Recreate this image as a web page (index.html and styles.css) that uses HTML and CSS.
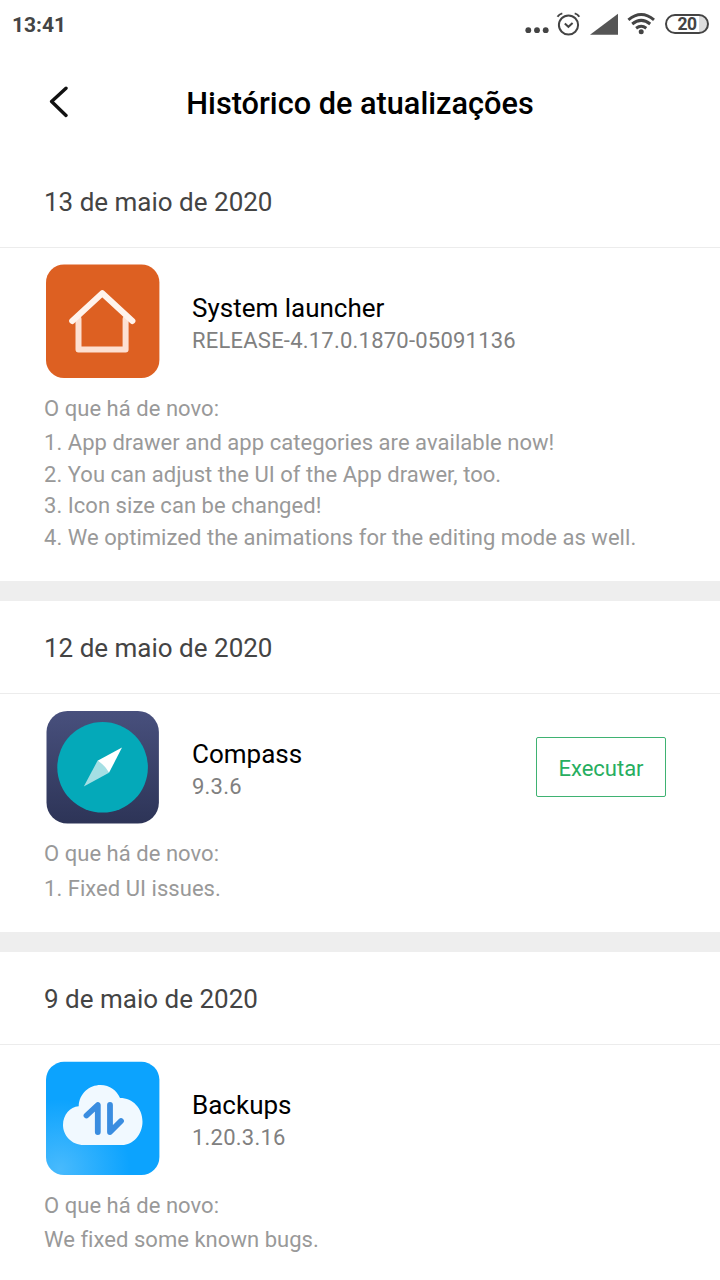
FILE: index.html
```html
<!DOCTYPE html>
<html lang="pt">
  <head>
    <meta charset="UTF-8" />
    <meta name="viewport" content="width=device-width, initial-scale=1.0" />
    <title>Histórico de atualizações</title>
    <link rel="stylesheet" href="styles.css">
  </head>
  <body>
    <div class="status-bar">
      <span class="clock">13:41</span>
      <div class="status-icons">
        <svg class="dots" width="24" height="24" viewBox="0 0 24 24">
          <circle cx="3.3" cy="18.2" r="2.9" />
          <circle cx="12" cy="18.2" r="2.9" />
          <circle cx="20.7" cy="18.2" r="2.9" />
        </svg>
        <svg class="alarm" width="24" height="24" viewBox="0 0 24 24">
          <circle cx="12.5" cy="13" r="9.6" />
          <path d="M8.8 11.6l3.6 3.2 4.2-3.8M1.5 4.8Q3.2 2.2 6.3 1.4M18.7 1.4Q21.8 2.2 23.3 4.8" />
        </svg>
        <svg class="signal" width="28" height="24" viewBox="0 0 28 24">
          <path d="M28 1.8V22.8H0z" />
        </svg>
        <svg class="wifi" width="28" height="24" viewBox="0 0 28 24">
          <path d="M1.4 7.8Q14.2-2.8 27 7.8M5.2 12Q14.2 4.8 23.2 12M9.1 16.2Q14.2 12.4 19.3 16.2" />
          <circle cx="14.2" cy="19.7" r="2.5" />
        </svg>
        <div class="battery"><span>20</span></div>
      </div>
    </div>

    <header class="header">
      <a class="back" href="#" aria-label="Voltar">
        <svg width="21" height="32" viewBox="0 0 21 32">
          <path d="M18 2.2L3.6 15.6 18 29.4" />
        </svg>
      </a>
      <h1>Histórico de atualizações</h1>
    </header>

    <main>
      <section class="update">
        <h2 class="date">13 de maio de 2020</h2>
        <div class="app">
          <svg class="app-icon" viewBox="0 0 114 114">
            <rect y=".5" width="113.4" height="113.5" rx="18" fill="#dd6022" />
            <g fill="none" stroke-width="6" stroke-linejoin="round" stroke-linecap="round">
              <path d="M32.5 55V85.4H79.6V55" stroke="#fde0d2" />
              <path d="M26.2 57L56.3 29.2 86.4 57" stroke="#fff3ec" />
            </g>
          </svg>
          <div class="app-info">
            <h3>System launcher</h3>
            <p>RELEASE-4.17.0.1870-05091136</p>
          </div>
        </div>
        <div class="notes">
          <h4>O que há de novo:</h4>
          <p>1. App drawer and app categories are available now!</p>
          <p>2. You can adjust the UI of the App drawer, too.</p>
          <p>3. Icon size can be changed!</p>
          <p>4. We optimized the animations for the editing mode as well.</p>
        </div>
      </section>

      <section class="update">
        <h2 class="date">12 de maio de 2020</h2>
        <div class="app">
          <svg class="app-icon" viewBox="0 0 114 114">
            <defs>
              <linearGradient id="navy" x1="0" y1="0" x2="0" y2="1">
                <stop offset="0" stop-color="#48507d" />
                <stop offset="1" stop-color="#2d3457" />
              </linearGradient>
            </defs>
            <rect x=".5" y="1" width="112.4" height="112.6" rx="21" fill="url(#navy)" />
            <circle cx="56.6" cy="57.3" r="45.3" fill="#04a9b9" />
            <path d="M76 37.6L51.5 50.8 63 62.8z" fill="#fff" />
            <path d="M51.5 50.8L37.8 76.5 63 62.8Q58.5 54.5 51.5 50.8z" fill="#a4dfe4" />
          </svg>
          <div class="app-info">
            <h3>Compass</h3>
            <p>9.3.6</p>
          </div>
          <button class="btn-run" type="button">Executar</button>
        </div>
        <div class="notes">
          <h4>O que há de novo:</h4>
          <p>1. Fixed UI issues.</p>
        </div>
      </section>

      <section class="update">
        <h2 class="date">9 de maio de 2020</h2>
        <div class="app">
          <svg class="app-icon" viewBox="0 0 114 114">
            <defs>
              <radialGradient id="sky" cx=".12" cy=".95" r=".62">
                <stop offset="0" stop-color="#48bafd" />
                <stop offset="1" stop-color="#0ca3fe" />
              </radialGradient>
            </defs>
            <rect y=".8" width="113.4" height="113.2" rx="18" fill="url(#sky)" />
            <path d="M38 84C25 84 17 74 17 64 17 54 24 46 32.7 45.3 33 32.5 43.5 24 54.5 24 64 24 70.5 29.5 74 37 87 37 96.5 47.5 96.5 60.5 96.500 73.5 87 84 76 84z" fill="#f1f9ff" />
            <path d="M40.5 54.5L51.8 44V71M64 44V71L75 60" fill="none" stroke="#3a8de0" stroke-width="5.8" stroke-linecap="round" stroke-linejoin="round" />
          </svg>
          <div class="app-info">
            <h3>Backups</h3>
            <p>1.20.3.16</p>
          </div>
        </div>
        <div class="notes">
          <h4>O que há de novo:</h4>
          <p>We fixed some known bugs.</p>
        </div>
      </section>
    </main>
  </body>
</html>
```

FILE: styles.css
```css
* {
  box-sizing: border-box;
  margin: 0;
  padding: 0;
}

body {
  width: 720px;
  height: 1280px;
  overflow: hidden;
  background: #fff;
  color: #000;
  font-family: Roboto, "Liberation Sans", sans-serif;
}

/* Status bar */
.status-bar {
  display: flex;
  justify-content: space-between;
  align-items: center;
  height: 48px;
  padding: 0 11px 0 12px;
  color: #444;
}

.clock {
  padding-top: 1px;
  font-size: 21px;
  font-weight: 700;
}

.status-icons {
  display: flex;
  align-items: center;
  fill: #444;
}

.dots {
  margin-right: 7px;
}

.alarm {
  margin-right: 10px;
  overflow: visible;
}

.signal {
  margin-right: 9px;
  fill: #555;
}

.wifi {
  margin-right: 10px;
  overflow: visible;
}

.alarm,
.wifi path {
  fill: none;
  stroke: #444;
  stroke-width: 2;
}

.wifi path {
  stroke-width: 3;
}

.battery {
  width: 44px;
  height: 20px;
  border: 2px solid #444;
  border-radius: 10px;
  background: linear-gradient(90deg, #fff 32px, #ddd 32px);
  font-size: 17.5px;
  font-weight: 700;
  line-height: 17px;
  text-align: center;
  letter-spacing: -0.5px;
}

/* Header */
.header {
  display: grid;
  grid-template-columns: 48px 1fr 48px;
  align-items: center;
  height: 107px;
  padding: 0 48px;
}

.back svg {
  display: block;
  fill: none;
  stroke: #111;
  stroke-width: 3.4;
  stroke-linecap: round;
  stroke-linejoin: round;
}

.header h1 {
  padding-top: 3px;
  font-size: 30.7px;
  font-weight: 500;
  text-align: center;
  white-space: nowrap;
}

/* Update list */
.update {
  border-bottom: 20px solid #eee;
}

.date {
  height: 93px;
  padding-left: 44px;
  border-bottom: 1px solid #ececec;
  color: #444;
  font-size: 26px;
  font-weight: 400;
  line-height: 95px;
}

.app {
  display: flex;
  align-items: center;
  padding: 16px 54px 0 46px;
}

.app-icon {
  width: 114px;
  height: 114px;
  margin-right: 32px;
}

.app-info {
  flex: 1;
  padding-top: 5px;
}

.app-info h3 {
  font-size: 26px;
  font-weight: 400;
  line-height: 34px;
}

.app-info p {
  color: #808080;
  font-size: 22px;
  letter-spacing: 0.22px;
  line-height: 31px;
}

.btn-run {
  width: 130px;
  height: 60px;
  margin-top: 1px;
  padding-top: 3px;
  border: 1px solid #3fb272;
  border-radius: 2px;
  background: #fff;
  color: #27ae60;
  font-family: inherit;
  font-size: 22px;
}

.notes {
  padding: 14.5px 44px 27.5px;
  color: #999;
  font-size: 22px;
  letter-spacing: 0.04px;
  line-height: 31.6px;
}

.notes h4 {
  margin-bottom: 3px;
  font-size: 22px;
  font-weight: 400;
}
```
